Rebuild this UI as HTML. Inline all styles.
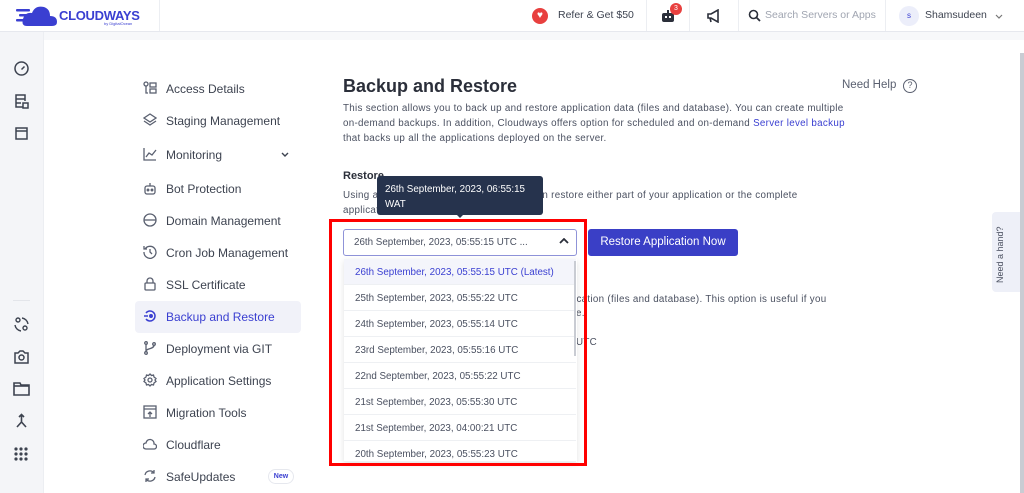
<!DOCTYPE html>
<html><head><meta charset="utf-8"><style>
*{margin:0;padding:0;box-sizing:border-box}
body{width:1024px;height:493px;overflow:hidden;background:#fff;font-family:"Liberation Sans",sans-serif;color:#3d4350;position:relative}
.abs{position:absolute}
.top{left:0;top:0;width:1024px;height:32px;border-bottom:1px solid #e6e8ee;background:#fff}
.vsep{position:absolute;top:0;height:31px;width:1px;background:#eceef2}
.rail{left:0;top:32px;width:44px;height:461px;background:#f4f5f8;border-right:1px solid #eceef2}
.band{left:44px;top:32px;width:980px;height:8px;background:#f7f8fa}
.nav{position:absolute;left:166px;font-size:12px;color:#3d4350}
.ic{position:absolute;left:143px;width:14px;height:14px}
p.d{font-size:9.8px;line-height:15px;color:#4a5060;white-space:nowrap;letter-spacing:.3px}
.item{position:absolute;left:344px;width:232px;height:26px;border-bottom:1px solid #eef0f3;font-size:9.8px;color:#4a5060;padding:8px 0 0 11px;background:#fff}
</style></head><body>
<div class="abs top"></div>
<div class="vsep" style="left:159px"></div>
<div class="vsep" style="left:646px"></div>
<div class="vsep" style="left:689px"></div>
<div class="vsep" style="left:738px"></div>
<div class="vsep" style="left:885px"></div>
<svg class="abs" style="left:16px;top:4px" width="42" height="24" viewBox="0 0 42 24"><g fill="#3a3fd1"><rect x="0" y="5" width="14" height="2.5" rx="1"/><rect x="3" y="10" width="12" height="2.5" rx="1"/><rect x="0" y="15" width="15" height="2.5" rx="1"/><path d="M11 22 Q5 22 7 15 Q9 8 16 9 Q19 1 28 3 Q34 5 34 12 Q41 12 41 18 Q41 22 36 22 Z"/></g></svg>
<div class="abs" style="left:59px;top:8px;font-size:13px;font-weight:bold;color:#3a3fd1;letter-spacing:-.3px">CLOUDWAYS</div>
<div class="abs" style="left:104px;top:21px;font-size:4px;color:#3a3fd1">by DigitalOcean</div>
<div class="abs" style="left:532px;top:8px;width:16px;height:16px;border-radius:50%;background:#e8403f;color:#fff;font-size:10px;text-align:center;line-height:16px">♥</div>
<div class="abs" style="left:558px;top:9px;font-size:10.5px;color:#3d4350">Refer &amp; Get $50</div>
<svg class="abs" style="left:660px;top:8px" width="16" height="16" viewBox="0 0 16 16"><rect x="2" y="5" width="12" height="9" rx="2" fill="#2b2f3a"/><rect x="5" y="8" width="2" height="2" fill="#fff"/><rect x="9" y="8" width="2" height="2" fill="#fff"/><rect x="7" y="2" width="2" height="3" fill="#2b2f3a"/></svg>
<div class="abs" style="left:670px;top:3px;width:12px;height:12px;border-radius:50%;background:#e8403f;color:#fff;font-size:7px;text-align:center;line-height:12px">3</div>
<svg class="abs" style="left:706px;top:9px" width="16" height="14" viewBox="0 0 16 14"><path d="M2 5h3l7-4v12l-7-4H2z M4 9l1 4" fill="none" stroke="#2b2f3a" stroke-width="1.6"/></svg>
<svg class="abs" style="left:748px;top:9px" width="13" height="13" viewBox="0 0 13 13"><circle cx="5.5" cy="5.5" r="4" fill="none" stroke="#2b2f3a" stroke-width="1.6"/><path d="M8.5 8.5L12 12" stroke="#2b2f3a" stroke-width="1.8"/></svg>
<div class="abs" style="left:765px;top:9px;font-size:10.5px;color:#a0a5b1">Search Servers or Apps</div>
<div class="abs" style="left:899px;top:6px;width:20px;height:20px;border-radius:50%;background:#eceefa;color:#3a3fd1;font-size:8px;text-align:center;line-height:20px">s</div>
<div class="abs" style="left:925px;top:9px;font-size:10.5px;color:#3d4350">Shamsudeen</div>
<svg class="abs" style="left:995px;top:14px" width="8" height="5" viewBox="0 0 8 5"><path d="M1 1l3 3 3-3" fill="none" stroke="#777" stroke-width="1.2"/></svg>
<div class="abs rail"></div>
<div class="abs band"></div>
<svg class="abs" style="left:13px;top:60px" width="17" height="17" viewBox="0 0 17 17" fill="none" stroke="#3d4350" stroke-width="1.5"><circle cx="8.5" cy="8.5" r="6.5"/><path d="M8.5 9.5l3-3"/></svg>
<svg class="abs" style="left:14px;top:93px" width="15" height="16" viewBox="0 0 15 16" fill="none" stroke="#3d4350" stroke-width="1.5"><path d="M9 14H2V2h9v6M2 6h9M2 10h5"/><rect x="9" y="10" width="5" height="5"/></svg>
<svg class="abs" style="left:14px;top:126px" width="15" height="15" viewBox="0 0 15 15" fill="none" stroke="#3d4350" stroke-width="1.5"><rect x="2" y="2" width="11" height="11"/><path d="M2 5h11"/></svg>
<div class="abs" style="left:13px;top:300px;width:17px;height:1px;background:#e3e5ea"></div>
<svg class="abs" style="left:13px;top:316px" width="17" height="17" viewBox="0 0 17 17" fill="none" stroke="#3d4350" stroke-width="1.4"><circle cx="5" cy="4" r="2"/><circle cx="12" cy="12" r="2"/><path d="M9 2a7 7 0 0 1 6 6M8 15a7 7 0 0 1-6-6"/></svg>
<svg class="abs" style="left:13px;top:348px" width="17" height="17" viewBox="0 0 17 17" fill="none" stroke="#3d4350" stroke-width="1.5"><path d="M2 5h3l2-2h3l2 2h3v10H2z"/><circle cx="8.5" cy="9.5" r="2.5"/></svg>
<svg class="abs" style="left:13px;top:381px" width="17" height="15" viewBox="0 0 17 15" fill="none" stroke="#3d4350" stroke-width="1.6"><path d="M1 2h6l1 2h8v10H1z"/><path d="M1 5h15"/></svg>
<svg class="abs" style="left:14px;top:413px" width="15" height="16" viewBox="0 0 15 16" fill="none" stroke="#3d4350" stroke-width="1.6"><path d="M7.5 2v7L3 14M7.5 9l4.5 5M5 4l2.5-2.5L10 4"/></svg>
<svg class="abs" style="left:14px;top:447px" width="14" height="14" viewBox="0 0 14 14" fill="#3d4350"><circle cx="2" cy="2" r="1.6"/><circle cx="7" cy="2" r="1.6"/><circle cx="12" cy="2" r="1.6"/><circle cx="2" cy="7" r="1.6"/><circle cx="7" cy="7" r="1.6"/><circle cx="12" cy="7" r="1.6"/><circle cx="2" cy="12" r="1.6"/><circle cx="7" cy="12" r="1.6"/><circle cx="12" cy="12" r="1.6"/></svg>
<div class="abs" style="left:135px;top:301px;width:166px;height:32px;background:#f1f2f9;border-radius:4px"></div>
<svg class="ic" style="top:81px" viewBox="0 0 14 14" fill="none" stroke="#5a6070" stroke-width="1.3"><circle cx="3" cy="3" r="2"/><path d="M3 5v7h2"/><rect x="7" y="2" width="6" height="4"/><rect x="7" y="8" width="6" height="4"/></svg>
<div class="nav" style="top:82px">Access Details</div>
<svg class="ic" style="top:113px" viewBox="0 0 14 14" fill="none" stroke="#5a6070" stroke-width="1.3"><path d="M7 1l6 4-6 4-6-4z M1 8l6 4 6-4"/></svg>
<div class="nav" style="top:114px">Staging Management</div>
<svg class="ic" style="top:147px" viewBox="0 0 14 14" fill="none" stroke="#5a6070" stroke-width="1.3"><path d="M1 1v12h12M3 10l3-4 3 2 4-5"/></svg>
<div class="nav" style="top:148px">Monitoring</div>
<svg class="abs" style="left:281px;top:152px" width="8" height="5" viewBox="0 0 8 5"><path d="M1 1l3 3 3-3" fill="none" stroke="#3d4350" stroke-width="1.4"/></svg>
<svg class="ic" style="top:181px" viewBox="0 0 14 14" fill="none" stroke="#5a6070" stroke-width="1.3"><rect x="2" y="5" width="10" height="8" rx="2"/><path d="M7 2v3"/><circle cx="5" cy="9" r=".8"/><circle cx="9" cy="9" r=".8"/></svg>
<div class="nav" style="top:182px">Bot Protection</div>
<svg class="ic" style="top:213px" viewBox="0 0 14 14" fill="none" stroke="#5a6070" stroke-width="1.3"><circle cx="7" cy="7" r="6"/><path d="M1 7h12"/></svg>
<div class="nav" style="top:214px">Domain Management</div>
<svg class="ic" style="top:245px" viewBox="0 0 14 14" fill="none" stroke="#5a6070" stroke-width="1.3"><path d="M2 4a6 6 0 1 1-1 3M7 4v3l2 2M1 1v3h3"/></svg>
<div class="nav" style="top:246px">Cron Job Management</div>
<svg class="ic" style="top:277px" viewBox="0 0 14 14" fill="none" stroke="#5a6070" stroke-width="1.3"><rect x="2" y="6" width="10" height="7" rx="1"/><path d="M4 6V4a3 3 0 0 1 6 0v2"/></svg>
<div class="nav" style="top:278px">SSL Certificate</div>
<svg class="ic" style="top:309px" viewBox="0 0 14 14" fill="none" stroke="#3a3fd1" stroke-width="1.5"><path d="M3 4a5 5 0 1 1 0 6M1 7h4"/><circle cx="8" cy="7" r="1.2" fill="#3a3fd1"/></svg>
<div class="nav" style="top:310px;color:#3a3fd1">Backup and Restore</div>
<svg class="ic" style="top:341px" viewBox="0 0 14 14" fill="none" stroke="#5a6070" stroke-width="1.3"><circle cx="3" cy="2" r="1.3"/><circle cx="3" cy="12" r="1.3"/><circle cx="11" cy="3" r="1.3"/><path d="M3 3.3v7.4M11 4.3c0 4-8 3-8 6"/></svg>
<div class="nav" style="top:342px">Deployment via GIT</div>
<svg class="ic" style="top:373px" viewBox="0 0 14 14" fill="none" stroke="#5a6070" stroke-width="1.3"><circle cx="7" cy="7" r="2"/><path d="M7 1l1.5 1.5 2-.5.5 2L13 5.5l-1 1.5 1 1.5-2 1.5-.5 2-2-.5L7 13l-1.5-1.5-2 .5-.5-2L1 8.5 2 7 1 5.5 3 4l.5-2 2 .5z"/></svg>
<div class="nav" style="top:374px">Application Settings</div>
<svg class="ic" style="top:405px" viewBox="0 0 14 14" fill="none" stroke="#5a6070" stroke-width="1.3"><rect x="1" y="1" width="12" height="12"/><path d="M1 4h12M7 12V7M5 9l2-2 2 2"/></svg>
<div class="nav" style="top:406px">Migration Tools</div>
<svg class="ic" style="top:437px" viewBox="0 0 14 14" fill="none" stroke="#5a6070" stroke-width="1.3"><path d="M3 12a3 3 0 0 1 0-6 4 4 0 0 1 8 1 2.5 2.5 0 0 1 0 5z"/></svg>
<div class="nav" style="top:438px">Cloudflare</div>
<svg class="ic" style="top:469px" viewBox="0 0 14 14" fill="none" stroke="#5a6070" stroke-width="1.3"><path d="M2 6a5 5 0 0 1 9-2M12 8a5 5 0 0 1-9 2M11 1v3H8M3 13v-3h3"/></svg>
<div class="nav" style="top:470px">SafeUpdates</div>
<div class="abs" style="left:268px;top:469px;width:26px;height:15px;border:1px solid #e6e8ee;border-radius:8px;font-size:7px;font-weight:bold;color:#3a3fd1;text-align:center;line-height:13px">New</div>
<div class="abs" style="left:343px;top:76px;font-size:18px;font-weight:bold;color:#2b2f3a">Backup and Restore</div>
<div class="abs" style="left:842px;top:79px;font-size:11.5px;color:#5a6070">Need Help</div>
<div class="abs" style="left:903px;top:79px;width:14px;height:14px;border:1.5px solid #5a6070;border-radius:50%;font-size:9px;text-align:center;line-height:11px;color:#5a6070">?</div>
<p class="d abs" style="left:343px;top:101px">This section allows you to back up and restore application data (files and database). You can create multiple<br>on-demand backups. In addition, Cloudways offers option for scheduled and on-demand <span style="color:#3a3fd1">Server level backup</span><br>that backs up all the applications deployed on the server.</p>
<div class="abs" style="left:343px;top:170px;font-size:11px;font-weight:bold;color:#2b2f3a">Restore</div>
<p class="d abs" style="left:343px;top:188px">Using a backup from a specific date you can restore either part of your application or the complete<br>application.</p>
<p class="d abs" style="left:560px;top:292px">pplication (files and database). This option is useful if you</p>
<p class="d abs" style="left:576px;top:306px">e.</p>
<p class="d abs" style="left:576px;top:335px">UTC</p>
<div class="abs" style="left:377px;top:176px;width:166px;height:39px;background:#26334d;border-radius:3px;color:#fff;font-size:9.8px;padding:6px 8px;line-height:15px">26th September, 2023, 06:55:15<br>WAT</div>
<div class="abs" style="left:455px;top:213px;width:0;height:0;border:5px solid transparent;border-top-color:#26334d"></div>
<div class="abs" style="left:343px;top:229px;width:234px;height:27px;border:1px solid #8f93d8;border-radius:3px;font-size:9.8px;color:#4a5060;padding:7px 0 0 10px">26th September, 2023, 05:55:15 UTC ...</div>
<svg class="abs" style="left:559px;top:238px" width="10" height="6" viewBox="0 0 10 6"><path d="M1 5l4-4 4 4" fill="none" stroke="#2b2f3a" stroke-width="1.8"/></svg>
<div class="abs" style="left:588px;top:229px;width:150px;height:27px;background:#3a3fc6;border-radius:3px;color:#fff;font-size:11.5px;text-align:center;line-height:27px">Restore Application Now</div>
<div class="abs" style="left:344px;top:259px;width:233px;height:203px;background:#fff;box-shadow:0 2px 6px rgba(0,0,0,.12)"></div>
<div class="item" style="top:259px;background:#f4f5fb;color:#3a3fd1">26th September, 2023, 05:55:15 UTC (Latest)</div>
<div class="item" style="top:285px">25th September, 2023, 05:55:22 UTC</div>
<div class="item" style="top:311px">24th September, 2023, 05:55:14 UTC</div>
<div class="item" style="top:337px">23rd September, 2023, 05:55:16 UTC</div>
<div class="item" style="top:363px">22nd September, 2023, 05:55:22 UTC</div>
<div class="item" style="top:389px">21st September, 2023, 05:55:30 UTC</div>
<div class="item" style="top:415px">21st September, 2023, 04:00:21 UTC</div>
<div class="item" style="top:441px;height:21px">20th September, 2023, 05:55:23 UTC</div>
<div class="abs" style="left:574px;top:261px;width:2px;height:95px;background:#c9ccd3"></div>
<div class="abs" style="left:329px;top:219px;width:258px;height:247px;border:3px solid #f00"></div>
<div class="abs" style="left:992px;top:212px;width:28px;height:80px;background:#eef0f8;border-radius:4px 0 0 4px"></div>
<div class="abs" style="left:995px;top:283px;font-size:9px;color:#4a5060;transform:rotate(-90deg);transform-origin:left top;white-space:nowrap">Need a hand?</div>
<div class="abs" style="left:1020px;top:53px;width:4px;height:440px;background:#c9ccd3"></div>
</body></html>
